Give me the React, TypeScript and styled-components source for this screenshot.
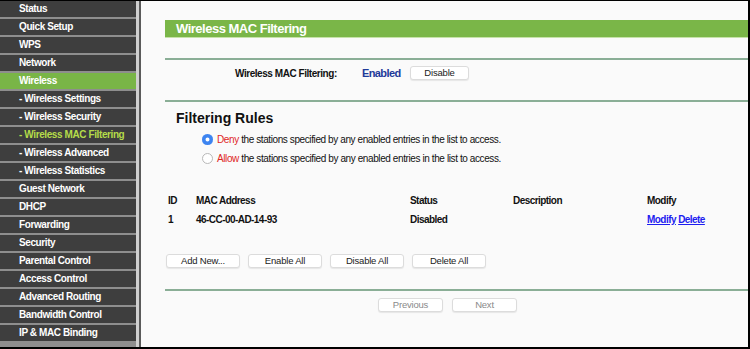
import React from "react";
import styled, {createGlobalStyle, css} from "styled-components";

const GlobalStyle = createGlobalStyle`
html, body { margin: 0; padding: 0; background: #fafafa; }
body { font-family: "Liberation Sans", Arial, sans-serif; }
`;

type NavItem = { label: string, active?: boolean, current?: boolean }
const navItems: NavItem[] = [
    {label: "Status"},
    {label: "Quick Setup"},
    {label: "WPS"},
    {label: "Network"},
    {label: "Wireless", active: true},
    {label: "- Wireless Settings"},
    {label: "- Wireless Security"},
    {label: "- Wireless MAC Filtering", current: true},
    {label: "- Wireless Advanced"},
    {label: "- Wireless Statistics"},
    {label: "Guest Network"},
    {label: "DHCP"},
    {label: "Forwarding"},
    {label: "Security"},
    {label: "Parental Control"},
    {label: "Access Control"},
    {label: "Advanced Routing"},
    {label: "Bandwidth Control"},
    {label: "IP & MAC Binding"},
];

const App: React.FC = () => <>
    <GlobalStyle/>
    <Frame>
        <Sidebar>
            {navItems.map(item =>
                <NavRow key={item.label} active={!!item.active} current={!!item.current}>{item.label}</NavRow>)}
        </Sidebar>
        <Main>
            <TitleBar>Wireless MAC Filtering</TitleBar>
            <Rule top={20}/>
            <StatusLine>
                <FieldLabel>Wireless MAC Filtering:</FieldLabel>
                <Enabled>Enabled</Enabled>
                <Button width={59}>Disable</Button>
            </StatusLine>
            <Rule top={20}/>
            <SectionTitle>Filtering Rules</SectionTitle>
            <RadioList>
                <RadioRow>
                    <Radio checked/>
                    <span><Red>Deny</Red> the stations specified by any enabled entries in the list to access.</span>
                </RadioRow>
                <RadioRow>
                    <Radio/>
                    <span><Red>Allow</Red> the stations specified by any enabled entries in the list to access.</span>
                </RadioRow>
            </RadioList>
            <Table>
                <Cell>ID</Cell>
                <Cell>MAC Address</Cell>
                <Cell>Status</Cell>
                <Cell>Description</Cell>
                <Cell>Modify</Cell>
                <Cell>1</Cell>
                <Cell>46-CC-00-AD-14-93</Cell>
                <Cell>Disabled</Cell>
                <Cell/>
                <Cell><Link>Modify</Link> <Link>Delete</Link></Cell>
            </Table>
            <ButtonRow>
                <Button width={74}>Add New...</Button>
                <Button width={74}>Enable All</Button>
                <Button width={74}>Disable All</Button>
                <Button width={74}>Delete All</Button>
            </ButtonRow>
            <Rule top={21}/>
            <PagerRow>
                <Button width={65} muted>Previous</Button>
                <Button width={65} muted>Next</Button>
            </PagerRow>
        </Main>
    </Frame>
</>;

const Frame = styled.div`
display: flex;
width: 750px;
height: 349px;
box-sizing: border-box;
border-top: 1px solid #000;
border-right: 2px solid #000;
border-bottom: 2px solid #000;
background: #fafafa;
overflow: hidden;
`;
const Sidebar = styled.nav`
width: 136px;
flex: none;
background: #8e8e8e;
border-right: 3px solid #cfcfcf;
box-shadow: 2px 0 0 #5a5a5a;
margin-right: 2px;
display: flex;
flex-direction: column;
gap: 2px;
`;
const NavRow = styled.div<{ active: boolean, current: boolean }>`
height: 16px;
line-height: 16px;
flex: none;
padding-left: 19px;
background: #3e3e3e;
color: #fff;
font-size: 10px;
letter-spacing: -0.4px;
font-weight: bold;
white-space: nowrap;
${p => p.active && css`background: #79b547;`}
${p => p.current && css`color: #b5dc4a;`}
`;
const Main = styled.main`
flex: 1;
padding: 19px 0 0 24px;
display: flex;
flex-direction: column;
font-size: 10px;
color: #111;
`;
const TitleBar = styled.div`
height: 17px;
line-height: 17px;
padding-left: 11px;
background: #7ab648;
border-bottom: 1px solid #c6e2a9;
color: #fff;
font-size: 13px;
letter-spacing: -0.5px;
font-weight: bold;
`;
const Rule = styled.div<{ top: number }>`
margin-top: ${p => p.top}px;
height: 2px;
background: #8aae96;
`;
const StatusLine = styled.div`
display: flex;
align-items: center;
height: 14px;
margin-top: 6px;
padding-left: 70px;
`;
const FieldLabel = styled.span`
font-weight: bold;
letter-spacing: -0.45px;
width: 127px;
`;
const Enabled = styled.span`
font-weight: bold;
font-size: 11px;
letter-spacing: -0.6px;
color: #1f3a99;
width: 48px;
`;
const Button = styled.button<{ width: number, muted?: boolean }>`
width: ${p => p.width}px;
height: 14px;
padding: 0;
background: #fff;
border: 1px solid #dcdcdc;
border-radius: 3px;
box-shadow: 0 1px 1px rgba(0, 0, 0, 0.08);
font-family: "Liberation Sans", Arial, sans-serif;
font-size: 9.5px;
letter-spacing: -0.2px;
color: ${p => p.muted ? "#8a8a8a" : "#222"};
line-height: 12px;
`;
const SectionTitle = styled.div`
margin-top: 8px;
padding-left: 11px;
font-size: 14px;
font-weight: bold;
line-height: 17px;
`;
const RadioList = styled.div`
margin-top: 6px;
padding-left: 37px;
display: flex;
flex-direction: column;
gap: 6px;
`;
const RadioRow = styled.label`
display: flex;
align-items: center;
gap: 4px;
height: 13px;
letter-spacing: -0.4px;
`;
const Radio = styled.span<{ checked?: boolean }>`
width: 11px;
height: 11px;
flex: none;
box-sizing: border-box;
border-radius: 50%;
${p => p.checked
    ? css`background: #3d84f0; box-shadow: inset 0 0 0 3.5px #3d84f0, inset 0 0 0 6px #fff;`
    : css`background: #fff; border: 1px solid #b8b8b8;`}
`;
const Red = styled.span`
color: #e0261e;
`;
const Table = styled.div`
margin-top: 26px;
margin-left: 3px;
display: grid;
grid-template-columns: 28px 214px 103px 134px 1fr;
grid-auto-rows: 19px;
align-items: center;
font-weight: bold;
letter-spacing: -0.55px;
`;
const Cell = styled.div`
white-space: nowrap;
`;
const Link = styled.a`
color: #1d1df0;
text-decoration: underline;
cursor: pointer;
`;
const ButtonRow = styled.div`
display: flex;
gap: 8px;
margin-top: 25px;
margin-left: 1px;
`;
const PagerRow = styled.div`
display: flex;
gap: 9px;
margin-top: 7px;
padding-left: 213px;
`;

export default App;
